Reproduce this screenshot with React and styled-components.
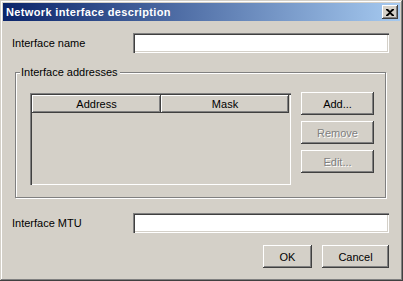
import React from 'react';
import styled, { createGlobalStyle } from 'styled-components';

const Global = createGlobalStyle`
    html, body {
        margin: 0;
        padding: 0;
        background: #d4d0c8;
    }
    * {
        box-sizing: border-box;
    }
`;

const Window = styled.div`
    width: 403px;
    height: 281px;
    padding: 3px;
    display: flex;
    flex-direction: column;
    background: #d4d0c8;
    font-family: "Liberation Sans", Arial, sans-serif;
    font-size: 11px;
    color: #000;
    box-shadow:
        inset -1px -1px 0 #404040,
        inset 1px 1px 0 #d4d0c8,
        inset -2px -2px 0 #808080,
        inset 2px 2px 0 #fff;
`;

const TitleBar = styled.div`
    height: 18px;
    display: flex;
    align-items: center;
    justify-content: space-between;
    padding: 0 2px 0 3px;
    background: linear-gradient(to right, #0a246a, #a6caf0);
    color: #fff;
    font-weight: bold;
    letter-spacing: 0.35px;
`;

const CloseButton = styled.div`
    width: 16px;
    height: 14px;
    display: flex;
    align-items: center;
    justify-content: center;
    background: #d4d0c8;
    box-shadow:
        inset -1px -1px 0 #404040,
        inset 1px 1px 0 #fff,
        inset -2px -2px 0 #808080;
`;

const Body = styled.div`
    flex: 1;
    display: flex;
    flex-direction: column;
    padding: 12px 11px 0 9px;
`;

const FieldRow = styled.div`
    display: flex;
    align-items: center;
    height: 20px;
    margin-top: ${props => props.top || 0}px;
`;

const Label = styled.div`
    width: 121px;
`;

const TextBox = styled.div`
    flex: 1;
    height: 100%;
    background: #fff;
    box-shadow:
        inset 1px 1px 0 #808080,
        inset 2px 2px 0 #404040,
        inset -1px -1px 0 #fff,
        inset -2px -2px 0 #d4d0c8;
`;

const GroupBox = styled.div`
    position: relative;
    margin: 19px 3px 0 3px;
    height: 126px;
    border: 1px solid #808080;
    box-shadow: inset 1px 1px 0 #fff, 1px 1px 0 #fff;
    display: flex;
    padding: 19px 0 0 14px;
    gap: 10px;
`;

const Legend = styled.div`
    position: absolute;
    top: -7px;
    left: 4px;
    padding: 0 2px 0 1px;
    background: #d4d0c8;
    line-height: 13px;
`;

const ListView = styled.div`
    width: 261px;
    height: 92px;
    margin-top: 1px;
    padding: 2px;
    background: #d4d0c8;
    box-shadow:
        inset 1px 1px 0 #808080,
        inset 2px 2px 0 #404040,
        inset -1px -1px 0 #fff,
        inset -2px -2px 0 #d4d0c8;
`;

const Header = styled.div`
    display: flex;
    height: 18px;
`;

const HeaderCell = styled.div`
    width: ${props => props.w}px;
    display: flex;
    align-items: center;
    justify-content: center;
    box-shadow:
        inset -1px -1px 0 #404040,
        inset 1px 1px 0 #fff,
        inset -2px -2px 0 #808080;
`;

const ButtonColumn = styled.div`
    display: flex;
    flex-direction: column;
    gap: 6px;
`;

const Button = styled.div`
    width: ${props => props.w || 73}px;
    height: 23px;
    display: flex;
    align-items: center;
    justify-content: center;
    background: #d4d0c8;
    color: ${props => props.disabled ? '#808080' : '#000'};
    text-shadow: ${props => props.disabled ? '1px 1px 0 #fff' : 'none'};
    box-shadow:
        inset -1px -1px 0 #404040,
        inset 1px 1px 0 #fff,
        inset -2px -2px 0 #808080;
`;

const Footer = styled.div`
    display: flex;
    justify-content: flex-end;
    gap: 10px;
    margin-top: 12px;
`;

export default function App() {
    return (
        <>
            <Global />
            <Window>
                <TitleBar>
                    <span>Network interface description</span>
                    <CloseButton>
                        <svg width="8" height="7" viewBox="0 0 8 7">
                            <path d="M0 0h2l2 2 2-2h2v1L5 3.5 8 6v1H6L4 5 2 7H0V6l3-2.5L0 1z" fill="#000" />
                        </svg>
                    </CloseButton>
                </TitleBar>
                <Body>
                    <FieldRow top={0}>
                        <Label>Interface name</Label>
                        <TextBox />
                    </FieldRow>
                    <GroupBox>
                        <Legend>Interface addresses</Legend>
                        <ListView>
                            <Header>
                                <HeaderCell w={129}>Address</HeaderCell>
                                <HeaderCell w={128}>Mask</HeaderCell>
                            </Header>
                        </ListView>
                        <ButtonColumn>
                            <Button>Add...</Button>
                            <Button disabled>Remove</Button>
                            <Button disabled>Edit...</Button>
                        </ButtonColumn>
                    </GroupBox>
                    <FieldRow top={15}>
                        <Label>Interface MTU</Label>
                        <TextBox />
                    </FieldRow>
                    <Footer>
                        <Button w={49}>OK</Button>
                        <Button w={67}>Cancel</Button>
                    </Footer>
                </Body>
            </Window>
        </>
    );
}
